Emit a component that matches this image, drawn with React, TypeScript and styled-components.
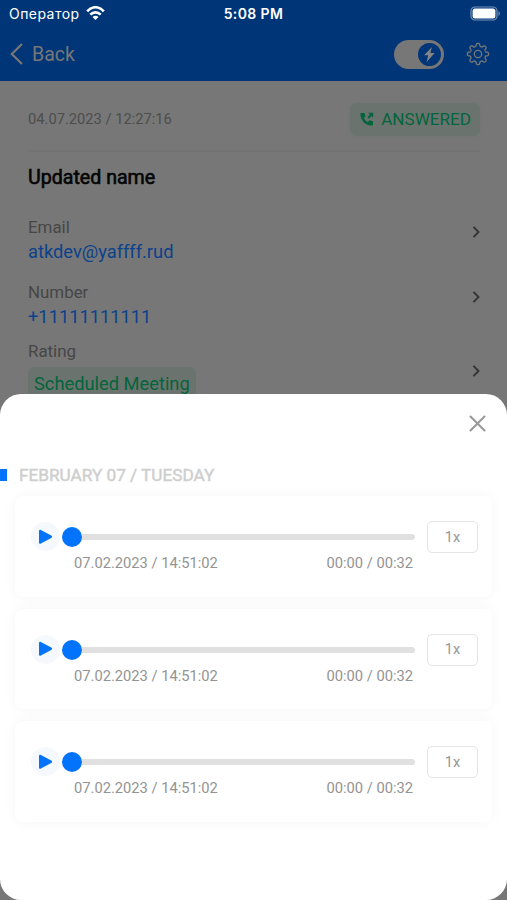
import React from "react";
import styled, { createGlobalStyle } from "styled-components";

const GlobalStyle = createGlobalStyle`
  * { box-sizing: border-box; }
  body { margin: 0; background: #777; font-family: Roboto, "Liberation Sans", sans-serif; }
  svg { display: block; flex: none; }
`;

const Screen = styled.div`
  position: relative;
  width: 507px;
  height: 900px;
  overflow: hidden;
  background: #777;
`;

const Header = styled.header`
  height: 81px;
  background: #003677;
`;

const StatusBar = styled.div`
  display: grid;
  grid-template-columns: 1fr auto 1fr;
  align-items: center;
  height: 27px;
  padding: 0 6px 0 9px;
  color: #fff;
`;

const Carrier = styled.div`
  display: flex;
  align-items: center;
  gap: 6px;
  font-family: Inter, Roboto, sans-serif;
  font-size: 14px;
  letter-spacing: 0.45px;
`;

const Clock = styled.div`
  margin-left: -3px;
  font-family: Inter, Roboto, sans-serif;
  font-weight: 600;
  font-size: 14px;
  letter-spacing: 0.4px;
`;

const BatterySlot = styled.div`
  justify-self: end;
`;

const NavBar = styled.nav`
  display: flex;
  align-items: center;
  height: 54px;
  padding: 0 17px 0 10px;
  color: #777;
`;

const BackLabel = styled.span`
  flex: 1;
  margin: 1px 0 0 9px;
  font-size: 19.5px;
  line-height: 24px;
`;

const Toggle = styled.div`
  display: flex;
  justify-content: flex-end;
  width: 50px;
  height: 29px;
  margin-right: 22px;
  padding: 3px;
  border-radius: 15px;
  background: #777;
`;

const Knob = styled.div`
  display: grid;
  place-items: center;
  width: 23px;
  height: 23px;
  border-radius: 50%;
  background: #003677;
`;

const Details = styled.main`
  padding: 20px 27px 0 28px;
`;

const CallRow = styled.div`
  display: flex;
  align-items: center;
  justify-content: space-between;
  height: 49px;
  padding-bottom: 13px;
  color: #4d4d4d;
  font-size: 14.7px;
`;

const Status = styled.div`
  display: flex;
  align-items: center;
  gap: 7px;
  height: 33px;
  padding: 0 9px 0 10px;
  border-radius: 7px;
  background: #6b736f;
  box-shadow: 0 0 3px #6f7572;
  color: #03653b;
  font-size: 17.1px;
`;

const Name = styled.h1`
  height: 66px;
  margin: 0;
  padding-top: 14px;
  border-top: 2px solid #737374;
  color: #050505;
  font-size: 19.6px;
  line-height: 24px;
  font-weight: 400;
  -webkit-text-stroke: 0.6px #050505;
`;

const Field = styled.div<{ $height: number }>`
  display: flex;
  justify-content: space-between;
  height: ${(p) => p.$height}px;
`;

const FieldLabel = styled.div`
  color: #464646;
  font-size: 16.9px;
  line-height: 22px;
`;

const FieldLink = styled.div`
  margin-top: 1px;
  color: #0b428b;
  font-size: 18.3px;
  line-height: 25px;
`;

const RatingTag = styled.div`
  width: 168px;
  height: 36px;
  margin-top: 5px;
  padding-left: 6px;
  border-radius: 6px;
  background: #6b736f;
  color: #03653b;
  font-size: 18.3px;
  line-height: 34px;
`;

const ArrowSlot = styled.div<{ $top: number }>`
  padding-top: ${(p) => p.$top}px;
`;

const Sheet = styled.section`
  position: absolute;
  inset: 394px 0 0;
  border-radius: 21px;
  background: #fff;
`;

const SheetTop = styled.div`
  display: flex;
  justify-content: flex-end;
  height: 71px;
  padding: 21px 21px 0 0;
`;

const DayHeading = styled.div`
  display: flex;
  align-items: center;
  gap: 12px;
  height: 20px;
  color: #cfcfcf;
  font-size: 17.2px;
  line-height: 20px;
  -webkit-text-stroke: 0.5px #cfcfcf;
`;

const DayMarker = styled.span`
  width: 7px;
  height: 12px;
  background: #0473fb;
`;

const Recordings = styled.div`
  display: grid;
  gap: 12px;
  padding: 11px 15px 0;
`;

const Card = styled.article`
  display: grid;
  grid-template-columns: 32px 354px 1fr;
  height: 100.5px;
  padding: 24px 14px 0 16px;
  border-radius: 8px;
  background: #fff;
  box-shadow: 0 0 13px rgba(0, 0, 0, 0.045);
`;

const PlayButton = styled.button`
  display: grid;
  place-items: center;
  width: 29px;
  height: 29px;
  margin: 2px 0 0;
  padding: 0;
  border: 0;
  border-radius: 50%;
  background: #f5f8fd;
`;

const Track = styled.div`
  display: flex;
  align-items: center;
  width: 354px;
  height: 34px;
`;

const Thumb = styled.div`
  flex: none;
  width: 20px;
  height: 20px;
  margin-left: -1px;
  border-radius: 50%;
  background: #0473fb;
`;

const Rail = styled.div`
  flex: 1;
  height: 6px;
  margin-left: -0.5px;
  margin-right: 2px;
  border-radius: 0 3px 3px 0;
  background: #e0e0e0;
`;

const Meta = styled.div`
  display: flex;
  justify-content: space-between;
  padding: 1px 4px 0 11px;
  color: #939393;
  font-size: 14.7px;
  line-height: 17px;
`;

const Speed = styled.button`
  width: 51px;
  height: 32px;
  margin: 1px 0 0 10px;
  padding: 0;
  border: 1.5px solid #e4e4e4;
  border-radius: 5px;
  background: #fff;
  color: #969696;
  font: 14.5px Roboto, sans-serif;
`;

const WifiIcon = () => (
  <svg width="19" height="15" viewBox="0 0 19 15" fill="none" stroke="#fff" strokeWidth="2.7">
    <path d="M1.2 5.3C6-.1 13-.1 17.8 5.3" />
    <path d="M4.3 8.6c3-3.1 7.400-3.100 10.400 0" />
    <path d="M9.500 14 6.500 11c1.700-1.600 4.300-1.600 6 0Z" fill="#fff" stroke="none" />
  </svg>
);

const BatteryIcon = () => (
  <svg width="31" height="15" viewBox="0 0 31 15">
    <rect x="1" y="1" width="26" height="13" rx="4" fill="none" stroke="#7790b3" strokeWidth="1.2" />
    <rect x="2.600" y="2.600" width="22.800" height="9.800" rx="2.500" fill="#fff" />
    <path d="M28.500 5.200c1.800.7 1.800 3.900 0 4.600Z" fill="#7790b3" />
  </svg>
);

const BackIcon = () => (
  <svg width="13" height="22" viewBox="0 0 13 22" fill="none" stroke="#777" strokeWidth="2.200">
    <path d="M12 1 1.800 11 12 21" />
  </svg>
);

const BoltIcon = () => (
  <svg width="13" height="17" viewBox="0 0 13 17" fill="#858585">
    <path d="M8.900 1 1.200 9.300h4L3.600 16l8.100-8.900H7.400Z" />
  </svg>
);

const gearOutline = Array.from({ length: 160 }, (_, i) => {
  const angle = (i / 160) * Math.PI * 2;
  const radius = 9.2 + 1.4 * Math.tanh(2.2 * Math.cos(8 * angle));
  return `${(12 + radius * Math.sin(angle)).toFixed(2)},${(12 - radius * Math.cos(angle)).toFixed(2)}`;
}).join(" ");

const GearIcon = () => (
  <svg width="24" height="24" viewBox="0 0 24 24" fill="none" stroke="#777" strokeWidth="1.300" strokeLinejoin="round">
    <polygon points={gearOutline} />
    <circle cx="12" cy="12" r="3.700" />
  </svg>
);

const CallIcon = () => (
  <svg width="14" height="14" viewBox="0 0 14 14" fill="#03653b">
    <path d="M1 1h3.100c.5 0 .7.200.8.700l.5 2.300c.1.400 0 .7-.3.900L3.800 6c.8 1.700 2.200 3.100 4 4l1.200-1.300c.3-.3.600-.4 1-.3l2.300.5c.5.100.7.400.7.800v3.100c0 .5-.3.800-.8.800C5.400 13.600.400 8.500.400 1.700c0-.4.200-.7.600-.7Z" />
    <path d="M8.200.8h5v5l-1.700-1.700-2.700 2.700-1.500-1.500L10 2.600Z" />
  </svg>
);

const ArrowIcon = () => (
  <svg width="8" height="12" viewBox="0 0 8 12" fill="none" stroke="#343434" strokeWidth="1.900">
    <path d="m1.500.8 5 5.200-5 5.200" />
  </svg>
);

const CloseIcon = () => (
  <svg width="17" height="17" viewBox="0 0 17 17" fill="none" stroke="#999" strokeWidth="2.100" strokeLinecap="round">
    <path d="m1.500 1.500 14 14m0-14-14 14" />
  </svg>
);

const PlayIcon = () => (
  <svg width="15" height="16" viewBox="0 0 15 16" fill="#0473fb">
    <path d="M1 2.200C1 1 1.900.6 2.900 1l10.300 5.500c1.300.7 1.300 1.700 0 2.400L2.900 14.600C1.900 15.100 1 14.600 1 13.400Z" />
  </svg>
);

const recordings = [1, 2, 3].map((id) => ({ id, date: "07.02.2023 / 14:51:02", time: "00:00 / 00:32" }));

export default function App() {
  return (
    <Screen>
      <GlobalStyle />
      <Header>
        <StatusBar>
          <Carrier>Оператор<WifiIcon /></Carrier>
          <Clock>5:08 PM</Clock>
          <BatterySlot><BatteryIcon /></BatterySlot>
        </StatusBar>
        <NavBar>
          <BackIcon />
          <BackLabel>Back</BackLabel>
          <Toggle><Knob><BoltIcon /></Knob></Toggle>
          <GearIcon />
        </NavBar>
      </Header>
      <Details>
        <CallRow>
          <span>04.07.2023 / 12:27:16</span>
          <Status><CallIcon />ANSWERED</Status>
        </CallRow>
        <Name>Updated name</Name>
        <Field $height={65}>
          <div><FieldLabel>Email</FieldLabel><FieldLink>atkdev@yaffff.rud</FieldLink></div>
          <ArrowSlot $top={10}><ArrowIcon /></ArrowSlot>
        </Field>
        <Field $height={59}>
          <div><FieldLabel>Number</FieldLabel><FieldLink>+11111111111</FieldLink></div>
          <ArrowSlot $top={10}><ArrowIcon /></ArrowSlot>
        </Field>
        <Field $height={64}>
          <div><FieldLabel>Rating</FieldLabel><RatingTag>Scheduled Meeting</RatingTag></div>
          <ArrowSlot $top={25}><ArrowIcon /></ArrowSlot>
        </Field>
      </Details>
      <Sheet>
        <SheetTop><CloseIcon /></SheetTop>
        <DayHeading><DayMarker />FEBRUARY 07 / TUESDAY</DayHeading>
        <Recordings>
          {recordings.map((r) => (
            <Card key={r.id}>
              <PlayButton aria-label="Play"><PlayIcon /></PlayButton>
              <div>
                <Track><Thumb /><Rail /></Track>
                <Meta><span>{r.date}</span><span>{r.time}</span></Meta>
              </div>
              <Speed>1x</Speed>
            </Card>
          ))}
        </Recordings>
      </Sheet>
    </Screen>
  );
}
